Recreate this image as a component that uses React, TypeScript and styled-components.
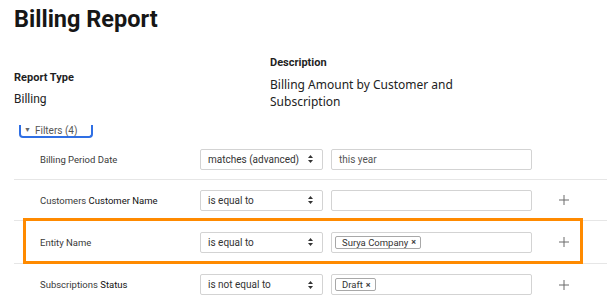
import React from "react";
import styled, { createGlobalStyle } from "styled-components";

const GlobalStyle = createGlobalStyle`
  html, body {
    margin: 0;
    padding: 0;
    background: #ffffff;
    font-family: Roboto, "Liberation Sans", sans-serif;
    color: #1f1f1f;
  }
  * {
    box-sizing: border-box;
  }
`;

const Page = styled.div`
  padding: 6px 0 0 14px;
  width: 607px;
  height: 305px;
  overflow: hidden;
`;

const Title = styled.h1`
  margin: 0;
  font-size: 23.5px;
  line-height: 26px;
  font-weight: 700;
  color: #161616;
`;

const Meta = styled.div`
  display: flex;
  align-items: flex-end;
  margin-top: 23px;
`;

const MetaColumn = styled.div<{ width?: number; shift?: number }>`
  display: flex;
  flex-direction: column;
  gap: 5px;
  width: ${({ width }) => (width ? `${width}px` : "auto")};
  padding-bottom: ${({ shift }) => shift || 0}px;
`;

const MetaLabel = styled.div`
  font-size: 11px;
  line-height: 16px;
  font-weight: 700;
  color: #1f1f1f;
`;

const MetaValue = styled.div`
  font-size: 12px;
  line-height: 17px;
  color: #222;
`;

const Description = styled(MetaValue)`
  font-family: "Noto Sans", Roboto, sans-serif;
  font-size: 12px;
`;

const FiltersToggle = styled.div`
  display: flex;
  align-items: center;
  gap: 4px;
  margin: 15px 0 0 5px;
  width: 74px;
  height: 13px;
  padding: 0 0 1px 3px;
  border: 2px solid #2f6fe4;
  border-top: none;
  border-radius: 0 0 4px 4px;
  font-size: 10px;
  color: #555;
`;

const Caret = styled.span`
  font-size: 7px;
  color: #666;
`;

const FilterList = styled.div`
  margin-top: 1px;
`;

const Row = styled.div<{ tall?: boolean }>`
  position: relative;
  display: grid;
  grid-template-columns: 152px 123px 201px 10px;
  column-gap: 8px;
  align-items: center;
  height: ${({ tall }) => (tall ? 43 : 41)}px;
  padding-left: 26px;
  border-bottom: 1px solid #e6e6e6;

  &:last-child {
    border-bottom: none;
  }
`;

const FieldLabel = styled.div`
  font-size: 9.5px;
  color: #3a3a3a;
  white-space: nowrap;
`;

const FieldName = styled.span`
  color: #111;
`;

const Select = styled.div`
  display: flex;
  align-items: center;
  justify-content: space-between;
  height: 21px;
  padding: 0 9px 0 7px;
  border: 1px solid #d3d3d3;
  border-radius: 2px;
  font-size: 10px;
  color: #333;
  background: #fff;
`;

const Input = styled.div`
  display: flex;
  align-items: center;
  height: 21px;
  padding: 0 6px 0 3px;
  border: 1px solid #d3d3d3;
  border-radius: 2px;
  font-size: 10px;
  color: #555;
  background: #fff;
`;

const InputText = styled.span`
  padding-left: 4px;
`;

const Tag = styled.span`
  display: inline-flex;
  align-items: center;
  gap: 3px;
  height: 13px;
  padding: 0 4px 0 6px;
  border: 1px solid #a8a8a8;
  border-radius: 2px;
  font-size: 9.5px;
  color: #333;
`;

const TagClose = styled.span`
  font-size: 9px;
  font-weight: 700;
  color: #444;
  line-height: 1;
  margin-top: 1px;
`;

const AddButton = styled.div`
  margin-left: 19px;
  display: flex;
  align-items: center;
  justify-content: center;
  width: 10px;
  height: 10px;
`;

const Highlight = styled.div`
  position: absolute;
  left: 9px;
  top: -3px;
  bottom: -1px;
  width: 560px;
  border: 3px solid #ff8a00;
  pointer-events: none;
`;

function SortArrows() {
  return (
    <svg width="5" height="8" viewBox="0 0 5 8">
      <path d="M2.5 0 L5 3 H0 Z" fill="#333" />
      <path d="M2.5 8 L5 5 H0 Z" fill="#333" />
    </svg>
  );
}

function PlusIcon() {
  return (
    <svg width="10" height="10" viewBox="0 0 10 10">
      <path d="M5 0 V10 M0 5 H10" stroke="#6b6b6b" strokeWidth="1" />
    </svg>
  );
}

type Filter = {
  view?: string;
  field: string;
  op: string;
  value?: string;
  tags?: string[];
  addable: boolean;
  highlighted?: boolean;
};

const filters: Filter[] = [
  { field: "Billing Period Date", op: "matches (advanced)", value: "this year", addable: false },
  { view: "Customers", field: "Customer Name", op: "is equal to", addable: true },
  { field: "Entity Name", op: "is equal to", tags: ["Surya Company"], addable: true, highlighted: true },
  { view: "Subscriptions", field: "Status", op: "is not equal to", tags: ["Draft"], addable: true },
];

export default function App() {
  return (
    <>
      <GlobalStyle />
      <Page>
        <Title>Billing Report</Title>

        <Meta>
          <MetaColumn width={256} shift={2}>
            <MetaLabel>Report Type</MetaLabel>
            <MetaValue>Billing</MetaValue>
          </MetaColumn>
          <MetaColumn>
            <MetaLabel>Description</MetaLabel>
            <Description>
              Billing Amount by Customer and
              <br />
              Subscription
            </Description>
          </MetaColumn>
        </Meta>

        <FiltersToggle>
          <Caret>▼</Caret>
          Filters (4)
        </FiltersToggle>

        <FilterList>
          {filters.map((f) => (
            <Row key={f.field} tall={f.highlighted}>
              <FieldLabel>
                {f.view ? (
                  <>
                    {f.view} <FieldName>{f.field}</FieldName>
                  </>
                ) : (
                  f.field
                )}
              </FieldLabel>
              <Select>
                <span>{f.op}</span>
                <SortArrows />
              </Select>
              <Input>
                {f.value && <InputText>{f.value}</InputText>}
                {f.tags?.map((t) => (
                  <Tag key={t}>
                    {t}
                    <TagClose>×</TagClose>
                  </Tag>
                ))}
              </Input>
              {f.addable ? (
                <AddButton>
                  <PlusIcon />
                </AddButton>
              ) : (
                <span />
              )}
              {f.highlighted && <Highlight />}
            </Row>
          ))}
        </FilterList>
      </Page>
    </>
  );
}
